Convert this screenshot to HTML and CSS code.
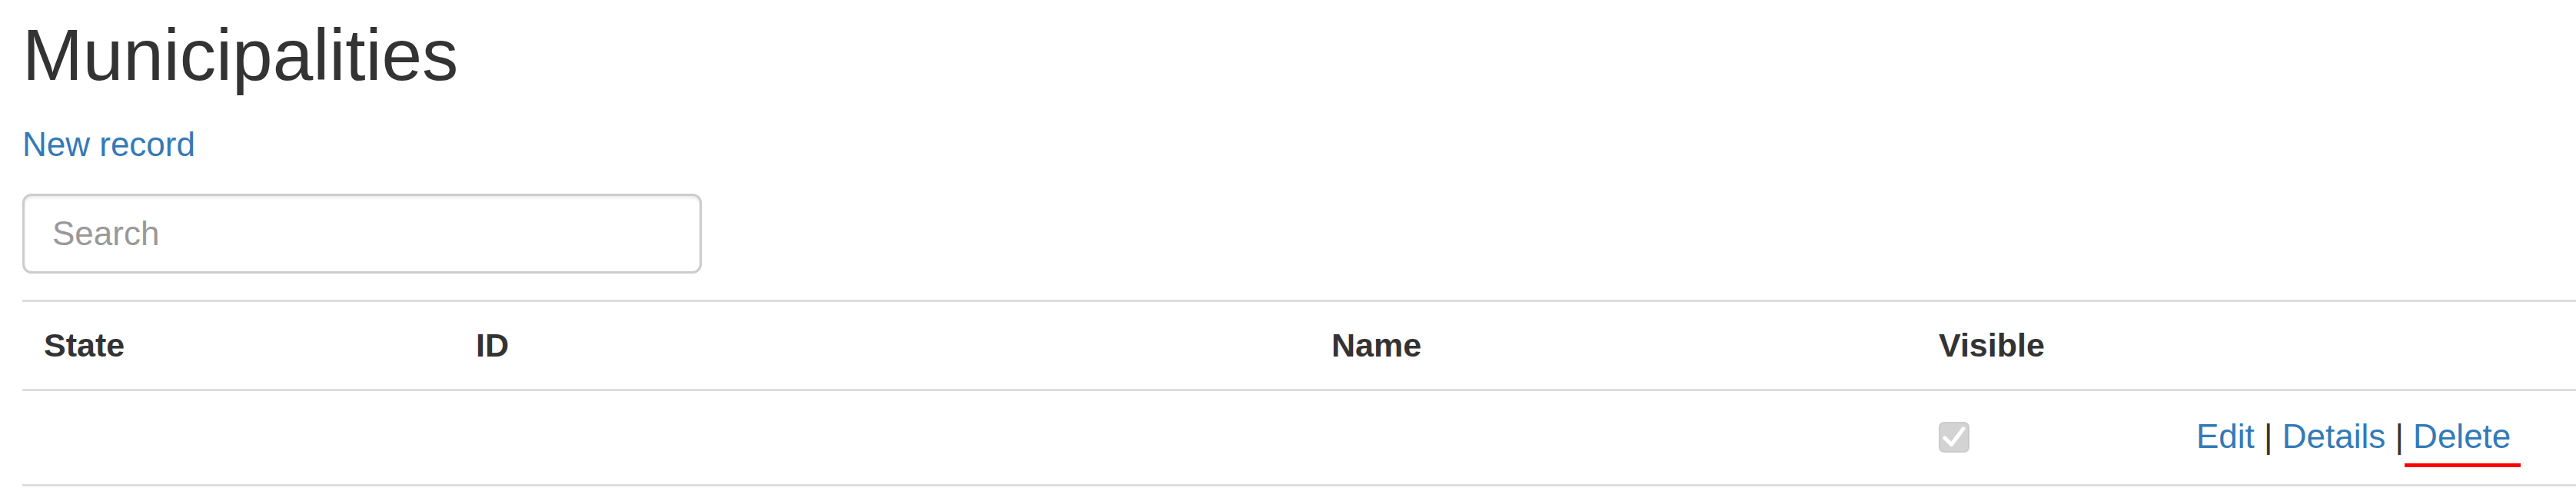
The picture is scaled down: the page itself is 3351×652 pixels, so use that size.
FILE: index.html
```html
<!DOCTYPE html>
<html lang="en">
<head>
<meta charset="utf-8">
<title>Municipalities</title>
<link rel="stylesheet" href="styles.css">
</head>
<body>
<div class="page">
  <h1 class="title">Municipalities</h1>
  <p class="new-link"><a href="#">New record</a></p>
  <input class="search" type="text" placeholder="Search">
  <table class="grid">
    <thead>
      <tr>
        <th class="c-state">State</th>
        <th class="c-id">ID</th>
        <th class="c-name">Name</th>
        <th class="c-visible">Visible</th>
        <th class="c-actions"></th>
      </tr>
    </thead>
    <tbody>
      <tr>
        <td></td>
        <td></td>
        <td></td>
        <td><span class="check" aria-label="checked, disabled"><svg viewBox="0 0 40 40" width="40" height="40"><rect x="1" y="1" width="38" height="38" rx="6" fill="#d3d3d3" stroke="#cbcbcb" stroke-width="2"/><path d="M8 21 L16.5 29.5 L32 9" fill="none" stroke="#ffffff" stroke-width="5" stroke-linecap="round" stroke-linejoin="round"/></svg></span></td>
        <td>
          <div class="actions"><a href="#">Edit</a> | <a href="#">Details</a> | <a href="#">Delete</a><span class="mark"></span></div>
        </td>
      </tr>
    </tbody>
  </table>
</div>
</body>
</html>
```
FILE: styles.css
```css
html, body {
  margin: 0;
  padding: 0;
  background: #ffffff;
}

body {
  font-family: "Liberation Sans", Arial, Helvetica, sans-serif;
  color: #333333;
  overflow: hidden;
}

.page {
  padding: 18px 0 0 29px;
}

.title {
  margin: 0;
  font-size: 94.5px;
  font-weight: 400;
  line-height: 106px;
  color: #333333;
}

.new-link {
  margin: 33px 0 0 0;
  font-size: 44px;
  line-height: 61px;
}

a {
  color: #337ab7;
  text-decoration: none;
}

.search {
  display: block;
  box-sizing: border-box;
  margin: 34px 0 0 0;
  width: 884px;
  height: 104px;
  padding: 0 20px 0 36px;
  border: 3px solid #cccccc;
  border-radius: 12px;
  box-shadow: inset 0 3px 3px rgba(0, 0, 0, 0.075);
  font-family: "Liberation Sans", Arial, Helvetica, sans-serif;
  font-size: 44px;
  color: #555555;
  background: #ffffff;
  outline: none;
}

.search::placeholder {
  color: #999999;
}

.grid {
  margin-top: 34px;
  width: 100%;
  border-collapse: separate;
  border-spacing: 0;
  table-layout: fixed;
  font-size: 44px;
  line-height: 61px;
}

.grid th {
  text-align: left;
  font-size: 43px;
  font-weight: 700;
  color: #333333;
  padding: 26px 28px 26px 28px;
  border-top: 3px solid #dddddd;
  border-bottom: 3px solid #dddddd;
}

.grid td {
  padding: 28px 28px 32px 28px;
  border-bottom: 3px solid #dddddd;
  white-space: nowrap;
}

.c-state { width: 506px; }
.c-id { width: 1057px; }
.c-name { width: 734px; }
.c-visible { width: 279px; }

.check {
  display: inline-block;
  width: 40px;
  height: 40px;
  vertical-align: -6px;
}

.check svg {
  display: block;
}

.actions {
  position: relative;
  color: #333333;
}

.mark {
  position: absolute;
  left: 271px;
  top: 66px;
  width: 151px;
  height: 5px;
  background: #ff0000;
}
```
